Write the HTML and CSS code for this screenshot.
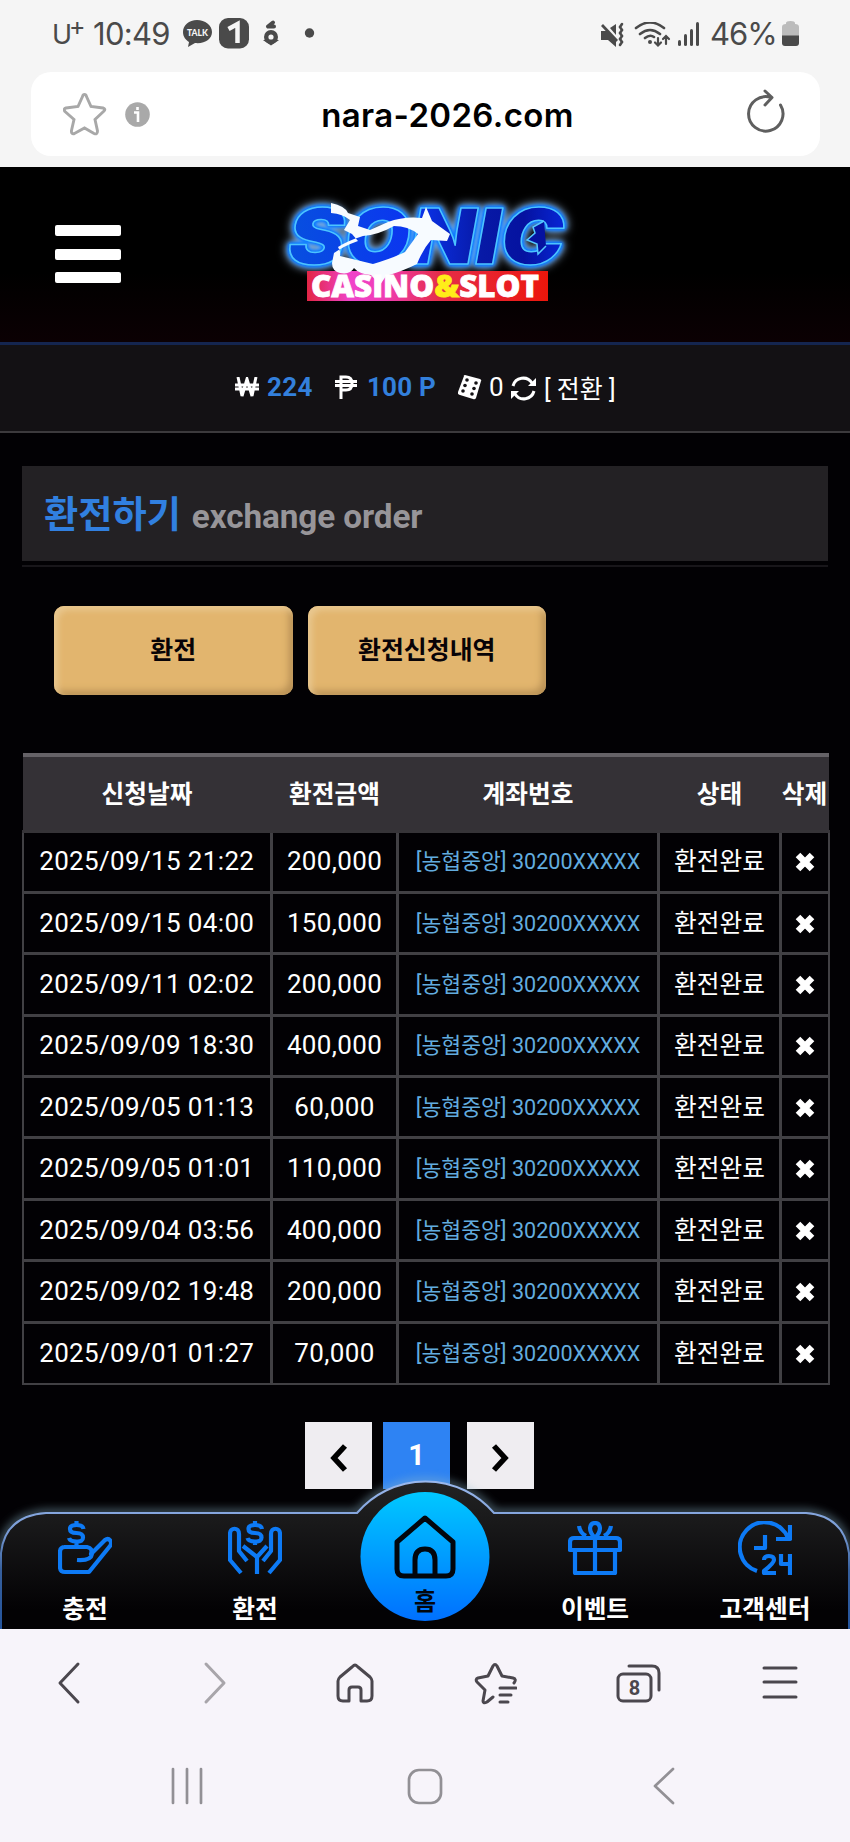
FILE: index.html
```html
<!DOCTYPE html>
<html lang="ko">
<head>
<meta charset="utf-8">
<title>환전하기</title>
<link rel="stylesheet" href="styles.css">
</head>
<body>
<div class="status">
  <span class="carrier">U<sup>+</sup></span><span class="clock">10:49</span>
  <svg class="notices" width="140" height="36" viewBox="0 0 140 36">
    <path d="M14 2C6 2 0 7 0 14c0 5 3 8 6 10l-1 5 7-4c10 1 17-4 17-11C29 7 22 2 14 2z" fill="#4a4a4a"/>
    <text x="14.500" y="18" class="talk" textLength="21" lengthAdjust="spacingAndGlyphs">TALK</text>
    <rect x="36" y="0" width="30" height="30.500" rx="9" fill="#4a4a4a"/>
    <path d="M45.500 11l9-5v19" fill="none" stroke="#f5f5f5" stroke-width="4.500"/>
    <circle cx="88" cy="19" r="4.800" fill="none" stroke="#4a4a4a" stroke-width="4.400"/>
    <path d="M85 8.500l5-4M85 8.500h6M86.500 24h3l-1.500 1z" stroke="#4a4a4a" stroke-width="4" stroke-linecap="round"/>
    <circle cx="126.500" cy="15" r="4.700" fill="#4a4a4a"/>
  </svg>
  <svg class="signals" width="100" height="28" viewBox="0 0 100 28">
    <g fill="#4a4a4a"><path d="M1 9h6l9 9v7l-8-7H1zM10 6l6-4v11zM1 4l2-2 15 16-2 2z"/><rect x="78" y="18" width="3" height="6" rx="1.500"/><rect x="84" y="12" width="3" height="12" rx="1.500"/><rect x="90" y="7" width="3" height="17" rx="1.500"/><rect x="96" y="0" width="3" height="24" rx="1.500"/><circle cx="50" cy="20" r="2"/></g>
    <g fill="none" stroke="#4a4a4a" stroke-width="2.600" stroke-linecap="round"><path d="M22 2l-2 3 2 3-2 3 2 3-2 3 2 3-2 3"/><path d="M36 6Q50-5 64 6M40 12Q50 4 60 12M45 16q5-4 9-1" /><path d="M58 16v7M55 20.500l3 3 3-3M66 22v-7M63 17l3-3 3 3" stroke-width="2.200"/></g>
  </svg>
  <span class="percent">46%</span>
  <svg class="battery" width="17" height="25" viewBox="0 0 17 25"><path d="M0 15V6Q0 3 4 3V2q0-2 4.500-2T13 2v1q4 0 4 3v9z" fill="#bcbcbc"/><path d="M0 14.500h17V22q0 3-3 3H3q-3 0-3-3z" fill="#4a4a4a"/></svg>
</div>
<div class="address">
  <svg width="44" height="44" viewBox="0 0 44 44"><path d="M21.500 2.500q1.500 0 2 2l4.500 10 12 1.500q3 1 1 3l-9 8.500 2.500 11.500q0 4-3.500 2.500l-9.500-5.500-10 5.500q-3.500 1-3-3l2.500-11-9-8q-2-2.500 1-3.500l12-1.500 4.500-10q.5-2 2-2z" fill="none" stroke="#a8a8a8" stroke-width="2.900"/></svg>
  <svg class="info" width="25" height="25" viewBox="0 0 25 25"><circle cx="12.500" cy="12.500" r="12.300" fill="#a9a9a9"/><path d="M9 10.500h4V20M12.500 5v3" fill="none" stroke="#fff" stroke-width="2.600"/></svg>
  <span class="url">nara-2026.com</span>
  <svg class="reload" width="40" height="46" viewBox="0 0 40 46"><path d="M34.500 18A17.200 17.200 0 1 1 25 10.500M19 4l7 6.500-7 7.500" fill="none" stroke="#5f5f5f" stroke-width="3" stroke-linecap="round" stroke-linejoin="round"/></svg>
</div>
<header class="top">
  <div class="burger"><i></i><i></i><i></i></div>
  <svg class="logo" width="310" height="120" viewBox="275 190 310 120">
    <defs>
      <linearGradient id="blue" x1="0" x2="1"><stop offset="0" stop-color="#0750df"/><stop offset=".45" stop-color="#0b35f0"/><stop offset=".7" stop-color="#0719a6"/><stop offset=".85" stop-color="#0512a0"/><stop offset="1" stop-color="#0726d8"/></linearGradient>
      <linearGradient id="red" x1="0" x2="1"><stop offset="0" stop-color="#e22545"/><stop offset=".18" stop-color="#f044ca"/><stop offset=".32" stop-color="#ef3db4"/><stop offset=".55" stop-color="#e52d49"/><stop offset="1" stop-color="#ec160b"/></linearGradient>
    </defs>
    <text class="word" x="288" y="264" textLength="276" lengthAdjust="spacingAndGlyphs">SONIC</text>
    <path d="M544 221l-11 6 2 6-8 7 10 4 1 10 8-8" fill="#0512a0" stroke="#55c8ff" stroke-width="1.500"/>
    <rect x="307" y="271" width="241" height="30" fill="url(#red)"/>
    <path d="M331 203q14 3 17 10l12 4-2 9 12 4 18-8q16-6 34-4l4-11 6 14 18 13-3 7-16-1q-8 9-14 24-14 7-31 12l-6 9-9-10q-12-1-17-7-4 7-14 5-8-2-8-10l2-10q10-7 24-12l-6-7-8-4 6-10q-7-6-19-7zm32 33q-16 5-25 11 3 5 2 9l33 8q20-6 32-12l13-18q-10-8-24-8-16 9-31 10z" fill="#f7fbff" fill-rule="evenodd"/>
    <text x="311" y="297" class="sub" textLength="228" lengthAdjust="spacingAndGlyphs">CASINO<tspan fill="#ffed19">&amp;</tspan>SLOT</text>
  </svg>
</header>
<div class="wallet">
  <svg width="24" height="20" viewBox="0 0 24 20"><path d="M3 0l4 19 5-17 5 17 4-19M0 8h24M0 12h24" fill="none" stroke="#fff" stroke-width="3"/></svg>
  <b class="won">224</b>
  <svg class="peso" width="22" height="24" viewBox="0 0 22 24"><path d="M6 24V2h5q6 0 6 6.500T11 15H6M0 6.500h22M0 10.500h22" fill="none" stroke="#fff" stroke-width="3"/></svg>
  <b class="points">100 P</b>
  <svg class="dice" width="24" height="25" viewBox="0 0 24 25"><path d="M6 1q-1-1 1-1l15 4q2 1 1 2l-5 17q-1 2-3 1L2 20q-3-1-2-3z" fill="#fff"/><g fill="#131114"><circle cx="9" cy="5" r="1.800"/><circle cx="7" cy="10.500" r="1.800"/><circle cx="5" cy="16" r="1.800"/><circle cx="18" cy="8" r="1.800"/><circle cx="16" cy="13.500" r="1.800"/><circle cx="14" cy="19" r="1.800"/></g></svg>
  <span class="zero">0</span>
  <svg class="sync" width="25" height="25" viewBox="0 0 25 25"><path d="M2 10A10.500 10.500 0 0 1 21 7M23 15A10.500 10.500 0 0 1 4 18" fill="none" stroke="#fff" stroke-width="3"/><path d="M25 2v8h-8zM0 23v-8h8z" fill="#fff"/></svg>
  <span class="swap">[ 전환 ]</span>
</div>
<main>
  <h1><span>환전하기</span> <small>exchange order</small></h1>
  <div class="tabs"><button>환전</button><button>환전신청내역</button></div>
  <table>
    <colgroup><col class="c1"><col class="c2"><col class="c3"><col class="c4"><col class="c5"></colgroup>
    <thead><tr><th>신청날짜</th><th>환전금액</th><th>계좌번호</th><th>상태</th><th>삭제</th></tr></thead>
    <tbody id="orders"></tbody>
  </table>
  <div class="pager">
    <span><svg width="19" height="28" viewBox="0 0 19 28"><path d="M16 2L5 14l11 12" /></svg></span>
    <b>1</b>
    <span><svg width="19" height="28" viewBox="0 0 19 28"><path d="M3 2l11 12L3 26"/></svg></span>
  </div>
</main>
<nav class="dock">
  <svg class="shape" width="850" height="166" viewBox="0 1463 850 166">
    <defs>
      <linearGradient id="bar" x1="0" y1="0" x2="0" y2="1"><stop offset="0" stop-color="#222324"/><stop offset=".25" stop-color="#1a1a1b"/><stop offset=".85" stop-color="#030204"/></linearGradient>
      <linearGradient id="edge" x1="0" y1="1482" x2="0" y2="1629" gradientUnits="userSpaceOnUse"><stop offset="0" stop-color="#9ab8ed"/><stop offset=".35" stop-color="#779ad4"/><stop offset=".6" stop-color="#365f9c"/><stop offset="1" stop-color="#24549c"/></linearGradient>
      <linearGradient id="home" x1="0" y1="0" x2="0" y2="1"><stop offset="0" stop-color="#00c8ff"/><stop offset="1" stop-color="#0070ff"/></linearGradient>
      <filter id="halo" x="-5%" y="-20%" width="110%" height="140%"><feGaussianBlur stdDeviation="5"/></filter>
    </defs>
    <path d="M1 1553Q5 1516 46 1513H357A90 90 0 0 1 494 1513H806Q844 1516 849 1553" fill="none" stroke="#8cb6c8" stroke-width="5" opacity=".75" filter="url(#halo)"/>
    <path d="M1 1632V1553Q5 1516 46 1513H357A90 90 0 0 1 494 1513H806Q844 1516 849 1553V1632" fill="url(#bar)" stroke="url(#edge)" stroke-width="2"/>
    <circle cx="425" cy="1556.500" r="64.500" fill="url(#home)"/>
  </svg>
  <a><svg width="54" height="54" viewBox="0 0 54 54"><path d="M6 26h23q6 1 4 7l14-14c4-3 8 2 5 6L31 51H7q-5 0-5-5V31q0-5 5-5M19 39q14 1 15-6"/><path d="M25.500 8Q25 4 18.500 4 12 4 12 8t6.500 4 6.500 4.500-6.500 4Q12 20.500 11 17M18.500 0v4M18.500 20v6"/></svg><span>충전</span></a>
  <a><svg width="54" height="54" viewBox="0 0 54 54"><path d="M13 52L2 39V13c0-7 9-7 9 0v17l8 10M41 52l11-13V13c0-7-9-7-9 0v17l-8 10M29 53V36L15 25M29 36l10-11"/><path d="M34 8Q33.500 4 27 4t-6.500 4T27 12t6.500 4.500-6.500 4Q20.500 20.500 19.500 17M27 0v4M27 20v4"/></svg><span>환전</span></a>
  <a class="home"><svg width="64" height="64" viewBox="0 0 64 64"><path d="M32 3L4 27v27q0 7 7 7h42q7 0 7-7V27zM22 61V45q0-11 10-11t10 11v16"/></svg><span>홈</span></a>
  <a><svg width="54" height="54" viewBox="0 0 54 54"><path d="M2 29v-8q0-4 4-4h42q4 0 4 4v8zM7 30v22h40V30M27 17v35M18 15q-6-3-7-10M36 15q6-3 7-10M27 17C19 9 22 2 27 2s8 7 0 15z"/></svg><span>이벤트</span></a>
  <a><svg width="54" height="54" viewBox="0 0 54 54"><path d="M19 50A25 25 0 1 1 50 17M52 4v14H38M27 14v13H16"/><path d="M26 39q0-4 5-4t5 4q0 3-10 11v2h12M43 33v10h11M52 33v21" stroke-width="4.200"/></svg><span>고객센터</span></a>
</nav>
<div class="browser">
  <svg width="44" height="44" viewBox="0 0 44 44"><path d="M31 3L13 22l18 19"/></svg>
  <svg class="dim" width="44" height="44" viewBox="0 0 44 44"><path d="M17 3l18 19-18 19"/></svg>
  <svg width="44" height="44" viewBox="0 0 44 44"><path d="M24 4q-1 0-3 2L9 16q-2 2-2 4v15q0 5 5 5h6V29q0-3 3-3h6q3 0 3 3v11h6q5 0 5-5V20q0-2-2-4L27 6q-2-2-3-2z"/></svg>
  <svg width="44" height="44" viewBox="0 0 44 44"><path d="M41 22q3-4-1-5l-11-2-5-10q-2-3-4 0l-5 10-10 2q-3 1-1 4l8 8-2 11q0 3 4 1l6-5M27 27h16M27 34h11M27 41h8"/></svg>
  <svg width="48" height="44" viewBox="0 0 48 44"><rect x="3" y="13" width="33" height="27" rx="5"/><path d="M14 5h23q7 0 7 7v17"/><text x="19.500" y="33.500">8</text></svg>
  <svg width="44" height="44" viewBox="0 0 44 44"><path d="M3 7h32M3 21h32M3 36h32"/></svg>
</div>
<div class="system">
  <svg width="40" height="40" viewBox="0 0 40 40"><path d="M6 3v34M20 3v34M34 3v34"/></svg>
  <svg width="40" height="40" viewBox="0 0 40 40"><rect x="4" y="4" width="32" height="33" rx="10"/></svg>
  <svg width="40" height="40" viewBox="0 0 40 40"><path d="M30 3L12 20l18 17"/></svg>
</div>
<script src="orders.js"></script>
</body>
</html>
```

FILE: orders.js
```js
const orders = [
  ["2025/09/15 21:22", "200,000"], ["2025/09/15 04:00", "150,000"],
  ["2025/09/11 02:02", "200,000"], ["2025/09/09 18:30", "400,000"],
  ["2025/09/05 01:13", "60,000"], ["2025/09/05 01:01", "110,000"],
  ["2025/09/04 03:56", "400,000"], ["2025/09/02 19:48", "200,000"],
  ["2025/09/01 01:27", "70,000"]
];
document.getElementById("orders").innerHTML = orders.map(([date, amount]) =>
  `<tr><td>${date}</td><td>${amount}</td><td class="account">[농협중앙] 30200XXXXX</td><td class="state">환전완료</td><td><svg class="remove" width="20" height="20" viewBox="0 0 20 20"><path d="M3 3l14 14M17 3L3 17"/></svg></td></tr>`
).join("");
```

FILE: styles.css
```css
* { box-sizing: border-box; }
body { margin: 0; width: 850px; height: 1842px; overflow: hidden; background: #020104; color: #fff; font-family: Roboto, "Noto Sans CJK KR", sans-serif; }
svg { display: block; flex: none; }

.status { height: 72px; background: #f5f5f5; color: #4a4a4a; display: flex; align-items: flex-start; padding: 18px 0 0 52px; font: 400 31px/31px Inter, sans-serif; }
.carrier { width: 41px; font-size: 27px; padding-top: 1px; white-space: nowrap; }
.carrier sup { font-size: 25px; line-height: 0; vertical-align: 9px; margin-left: -3px; }
.clock { width: 90px; letter-spacing: -.7px; }
.status .signals { margin: 4px 0 0 277px; }
.percent { width: 67px; margin-left: 10px; font-size: 31px; letter-spacing: -1px; }
.status .battery { margin: 3px 0 0 5px; }
.talk { font: 900 9px Lato, sans-serif; fill: #f5f5f5; text-anchor: middle; }

.address { width: 789px; height: 84px; margin-left: 31px; background: #fff; border-radius: 20px; display: flex; align-items: center; padding-left: 32px; color: #000; box-shadow: 0 0 0 100px #f5f5f5; clip-path: inset(0 -40px -11px -40px); }
.info { margin-left: 18px; }
.url { width: 281px; margin-left: 157px; text-align: center; font: 600 33px Inter, sans-serif; letter-spacing: .35px; padding-top: 2px; }
.reload { margin-left: 158px; margin-top: -8px; }

.top { height: 178px; margin-top: 11px; background: linear-gradient(#000 60%, #0b0003); border-bottom: 3px solid #14254f; display: flex; }
.burger { padding: 58px 0 0 55px; display: flex; flex-direction: column; gap: 12.600px; }
.burger i { width: 66px; height: 11px; border-radius: 2px; background: #fff; }
.logo { margin: 23px 0 0 154px; overflow: visible; }
.word { font: italic 900 77px Inter, sans-serif; stroke: #4cc3ff; stroke-width: 1.500px; stroke-linejoin: round; fill: url(#blue); filter: drop-shadow(0 0 1.500px #0b79ff) drop-shadow(0 0 1.500px #0b79ff) drop-shadow(0 0 2px #0b79ff) drop-shadow(0 0 4px #b8dcff); }
.sub { font: 800 30px "Open Sans", sans-serif; fill: #fff; stroke: #fff; stroke-width: .8px; }
.sub tspan { stroke: #ffed19; }

.wallet { height: 88px; background: #131114; border-bottom: 2px solid #3c3a3d; display: flex; align-items: flex-start; padding: 32px 0 0 235px; font-size: 26px; line-height: 20px; }
.wallet b { color: #3380dc; }
.won { width: 58px; margin-left: 8px; letter-spacing: .3px; }
.wallet .peso { margin: -2px 0 0 10px; }
.points { width: 83px; margin-left: 10px; letter-spacing: .2px; }
.wallet .dice { margin: -2px 0 0 8px; }
.zero { margin-left: 7px; width: 17px; }
.wallet .sync { margin: -1px 0 0 5px; }
.swap { margin-left: 8px; font: 25px/20px Roboto, "Noto Sans CJK KR", sans-serif; padding-top: 3px; white-space: nowrap; }

main { padding: 33px 22px 0; height: 1056px; }
h1 { margin: 0; height: 95px; background: #232124; box-shadow: 0 4px #020104, 0 6px #18161a; display: flex; align-items: baseline; gap: 11px; padding: 23px 0 0 22px; font-size: 37.200px; line-height: 53px; color: #3180e0; }
h1 small { font-size: 33.300px; color: #979599; letter-spacing: -.1px; }
.tabs { display: flex; gap: 15px; padding: 45px 0 0 32px; }
button { width: 238.500px; height: 89px; padding: 0 0 6px; border: 0; border-radius: 10px; background: #e2b56e; box-shadow: inset 4px 4px 6px #e9c890, inset -4px -4px 7px #b89055; color: #080307; font: bold 24.900px "Noto Sans CJK KR", sans-serif; }
table { width: 806px; margin: 58px 0 0 -.500px; border-collapse: collapse; table-layout: fixed; }
.c1 { width: 249px; } .c2 { width: 126px; } .c3 { width: 261px; } .c4 { width: 122px; } .c5 { width: 48px; }
th { height: 76px; padding: 0 0 2px; background: #343136; border-top: 4px solid #656267; border-bottom: 3px solid #363438; font: bold 24.700px/30px "Noto Sans CJK KR", sans-serif; white-space: nowrap; }
td { height: 61.400px; padding: 0 0 1px; text-align: center; border: 3px solid #414044; font-size: 26px; line-height: 34px; white-space: nowrap; letter-spacing: .35px; }
td:first-child { border-left-width: 2px; }
td:last-child { border-right-width: 2px; }
tbody tr:last-child td { border-bottom-width: 2px; }
.account { font-size: 21.600px; letter-spacing: 0; color: #62acdf; padding: 1px 0 0; }
.state { font-size: 24.700px; letter-spacing: 0; padding: 1px 0 0; }
.remove { margin: 2px auto 0; }
.remove path { stroke: #fff; stroke-width: 6.500px; }
.pager { display: flex; margin: 37px 0 0 283px; }
.pager span, .pager b { width: 67px; height: 67px; background: #efedf1; display: flex; align-items: center; justify-content: center; font-size: 29px; }
.pager b { background: #2e83f3; margin: 0 17px 0 11px; padding-bottom: 1px; }
.pager path { fill: none; stroke: #000; stroke-width: 5.500px; }
.pager svg { margin-top: 6px; }

.dock { position: relative; height: 166px; margin-top: -26px; display: grid; grid-template-columns: repeat(5, 170px); }
.shape { position: absolute; inset: 0; }
.dock a { position: relative; padding-top: 58px; display: flex; flex-direction: column; align-items: center; font: bold 24.700px/30px "Noto Sans CJK KR", sans-serif; }
.dock a svg { fill: none; stroke: #0d7af5; stroke-width: 4.200px; stroke-linejoin: round; }
.dock a span { margin-top: 17px; }
.dock a.home { padding-top: 52px; color: #02060d; }
.dock a.home svg { stroke: #02060d; stroke-width: 5px; }
.dock a.home span { margin-top: 6px; font-size: 24px; }

.browser { height: 106px; background: #f7f4fa; display: flex; padding: 32px 0 0 47px; gap: 98px; }
.browser svg { fill: none; stroke: #4b474e; stroke-width: 3px; stroke-linecap: round; stroke-linejoin: round; }
.browser .dim { stroke: #a8a5aa; }
.browser svg text { font: bold 20px Roboto, sans-serif; stroke: none; fill: #4b474e; text-anchor: middle; }
.system { height: 107px; background: #f7f4fa; display: flex; padding: 31px 0 0 167px; gap: 198px; }
.system svg { fill: none; stroke: #929095; stroke-width: 2.700px; stroke-linecap: round; stroke-linejoin: round; }
```
